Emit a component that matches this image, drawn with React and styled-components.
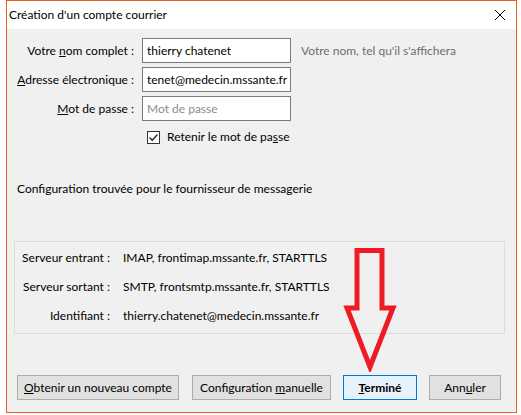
import styled, { createGlobalStyle } from "styled-components";

/* ---------------- GLOBAL ---------------- */

const GlobalStyle = createGlobalStyle`
  html, body {
    margin: 0;
    padding: 0;
    background: #ffffff;
  }
  body {
    font-family: "Lato", "Noto Sans", sans-serif;
    font-size: 12px;
    line-height: 16px;
    color: #000;
  }
`;

/* ---------------- PAGE / WINDOW ---------------- */

const Page = styled.div`
  width: 521px;
  height: 415px;
  position: relative;
  overflow: hidden;
  padding-left: 6px;
  box-sizing: border-box;
`;

const Window = styled.div`
  width: 511px;
  height: 413px;
  box-sizing: border-box;
  border: 1px solid #ec5a22;
  background: #f0f0f0;
  display: flex;
  flex-direction: column;
`;

const TitleBar = styled.div`
  height: 28px;
  flex: none;
  background: #fff;
  display: flex;
  align-items: center;
  justify-content: space-between;
  padding: 0 10px 0 2px;
`;

const Title = styled.span`
  font-size: 12px;
`;

const Content = styled.div`
  flex: 1;
  display: flex;
  flex-direction: column;
  padding: 9px 10px 12px 10px;
`;

/* ---------------- FORM ---------------- */

const Form = styled.div`
  display: grid;
  grid-template-columns: 117px 149px auto;
  column-gap: 8px;
  row-gap: 4px;
  align-items: center;
`;

const Label = styled.label`
  text-align: right;
  white-space: nowrap;
`;

const Input = styled.div`
  height: 25px;
  box-sizing: border-box;
  border: 1px solid #7a7a7a;
  background: #fff;
  padding: 0 4px;
  display: flex;
  align-items: center;
  white-space: nowrap;
  overflow: hidden;
  color: ${(p) => (p.$placeholder ? "#8f8a8d" : "#000")};
`;

const Hint = styled.span`
  color: #6d6d6d;
  margin-left: 2px;
  white-space: nowrap;
`;

const CheckRow = styled.div`
  display: flex;
  align-items: center;
  gap: 7px;
  margin: 8px 0 0 130px;
`;

const Box = styled.span`
  width: 13px;
  height: 13px;
  box-sizing: border-box;
  border: 1px solid #333;
  background: #fff;
  display: flex;
  align-items: center;
  justify-content: center;
`;

const Status = styled.p`
  margin: 36px 0 0 0;
`;

/* ---------------- SERVER BOX ---------------- */

const ServerBox = styled.div`
  margin: 44px 1px 0 -3px;
  border: 1px solid #dcdcdc;
  padding: 8px 0 9px 0;
  display: grid;
  grid-template-columns: 95px auto;
  column-gap: 13px;
  row-gap: 13px;
`;

const ServerLabel = styled.span`
  text-align: right;
  white-space: nowrap;
`;

const ServerValue = styled.span`
  white-space: nowrap;
`;

/* ---------------- BUTTONS ---------------- */

const Spacer = styled.div`
  flex: 1;
`;

const ButtonRow = styled.div`
  display: flex;
  gap: 12px;
`;

const Button = styled.div`
  width: ${(p) => p.$w}px;
  height: 25px;
  box-sizing: border-box;
  border: 1px solid ${(p) => (p.$primary ? "#0078d7" : "#adadad")};
  background: ${(p) => (p.$primary ? "#e5f1fb" : "#e1e1e1")};
  font-weight: ${(p) => (p.$primary ? 700 : 400)};
  display: flex;
  align-items: center;
  justify-content: center;
  white-space: nowrap;
  margin-right: ${(p) => p.$mr || 0}px;
`;

const U = styled.span`
  text-decoration: underline;
`;

const Arrow = styled.svg`
  position: absolute;
  left: 343px;
  top: 246px;
`;

/* ---------------- COMPONENT ---------------- */

export default function App() {
  return (
    <>
      <GlobalStyle />
      <Page>
        <Window>
          <TitleBar>
            <Title>Création d'un compte courrier</Title>
            <svg width="12" height="12" viewBox="0 0 12 12">
              <path d="M1 1 L11 11 M11 1 L1 11" stroke="#000" strokeWidth="1" />
            </svg>
          </TitleBar>
          <Content>
            <Form>
              <Label>
                Votre <U>n</U>om complet :
              </Label>
              <Input>thierry chatenet</Input>
              <Hint>Votre nom, tel qu'il s'affichera</Hint>

              <Label>
                <U>A</U>dresse électronique :
              </Label>
              <Input>tenet@medecin.mssante.fr</Input>
              <span />

              <Label>
                <U>M</U>ot de passe :
              </Label>
              <Input $placeholder>Mot de passe</Input>
              <span />
            </Form>

            <CheckRow>
              <Box>
                <svg width="11" height="11" viewBox="0 0 11 11">
                  <path d="M1.5 5.5 L4.2 8.2 L9.5 2.5" fill="none" stroke="#222" strokeWidth="1.3" />
                </svg>
              </Box>
              <span>
                Retenir le mot de pa<U>s</U>se
              </span>
            </CheckRow>

            <Status>Configuration trouvée pour le fournisseur de messagerie</Status>

            <ServerBox>
              <ServerLabel>Serveur entrant :</ServerLabel>
              <ServerValue>IMAP, frontimap.mssante.fr, STARTTLS</ServerValue>
              <ServerLabel>Serveur sortant :</ServerLabel>
              <ServerValue>SMTP, frontsmtp.mssante.fr, STARTTLS</ServerValue>
              <ServerLabel>Identifiant :</ServerLabel>
              <ServerValue>thierry.chatenet@medecin.mssante.fr</ServerValue>
            </ServerBox>

            <Spacer />

            <ButtonRow>
              <Button $w={162} $mr={1}>
                <span>
                  <U>O</U>btenir un nouveau compte
                </span>
              </Button>
              <Button $w={139}>
                <span>
                  Configuration <U>m</U>anuelle
                </span>
              </Button>
              <Button $w={74} $primary>
                <span>
                  <U>T</U>erminé
                </span>
              </Button>
              <Button $w={72}>
                <span>
                  Ann<U>u</U>ler
                </span>
              </Button>
            </ButtonRow>
          </Content>
        </Window>

        {/* annotation arrow */}
        <Arrow width="54" height="126" viewBox="0 0 54 126">
          <path
            d="M14 4.5 H39 V62 H50 L27 121 L4 62 H14 Z"
            fill="none"
            stroke="#ed1c24"
            strokeWidth="5"
            strokeLinejoin="miter"
          />
        </Arrow>
      </Page>
    </>
  );
}
